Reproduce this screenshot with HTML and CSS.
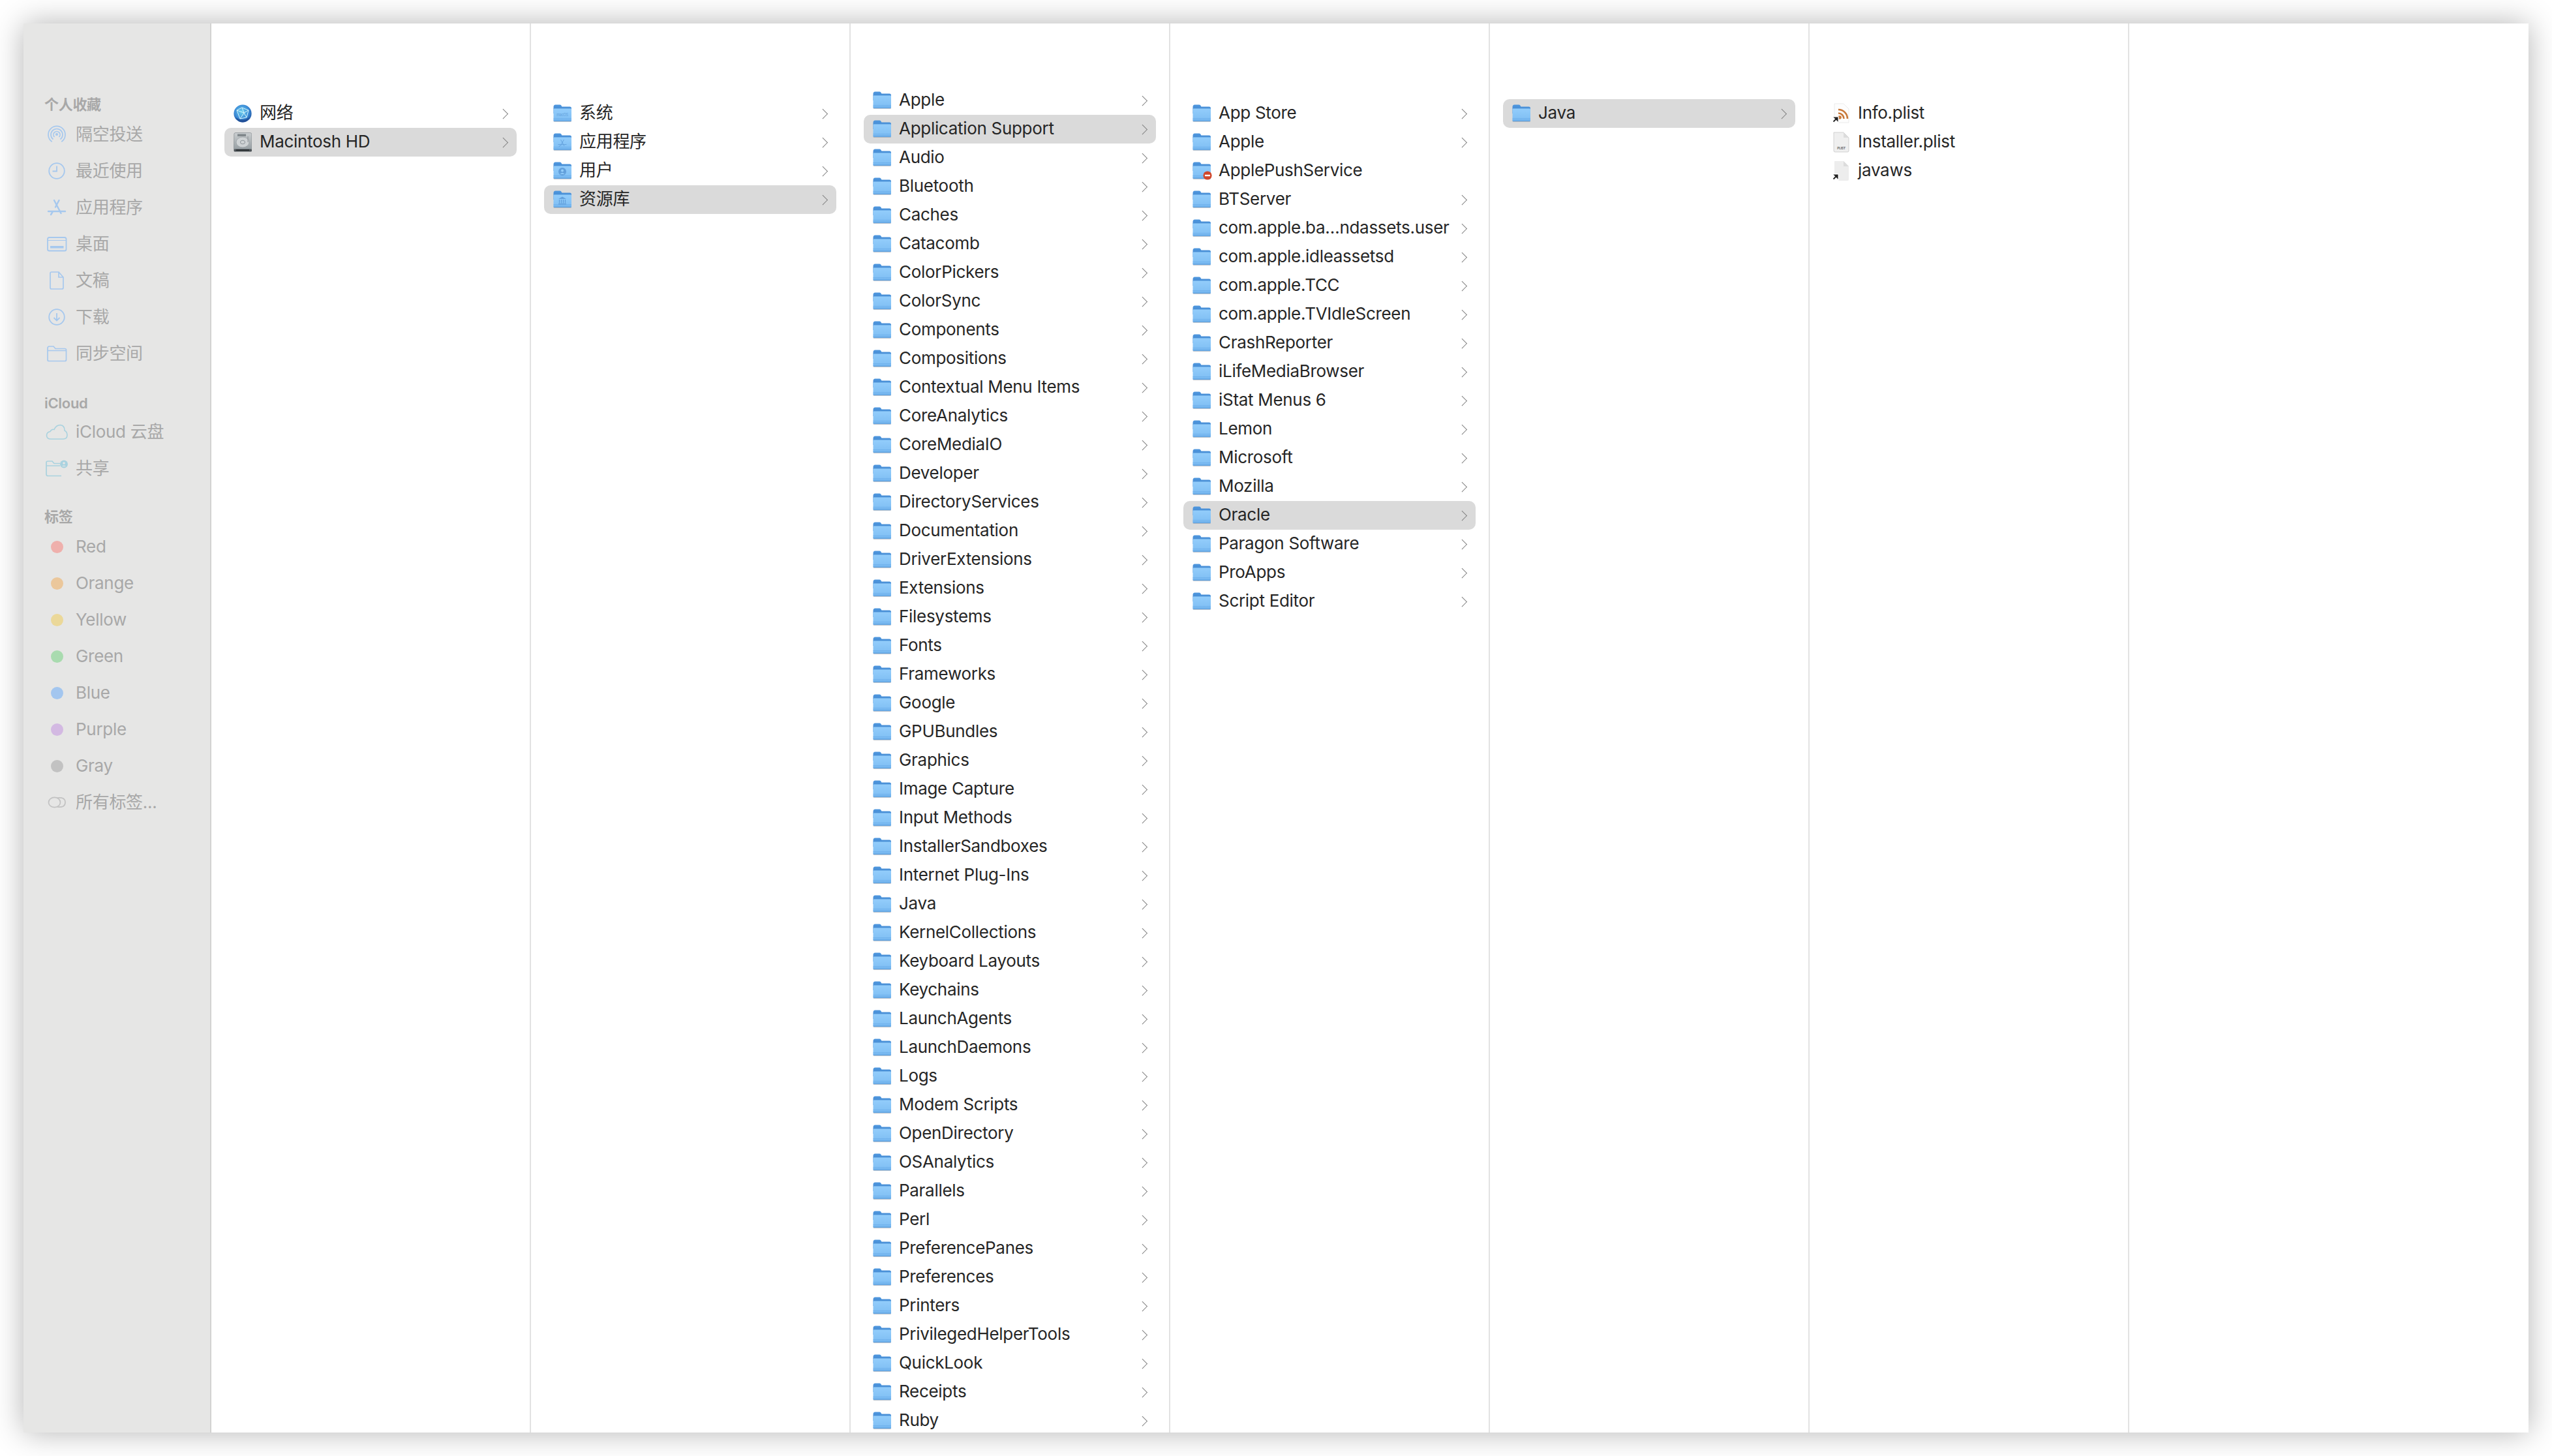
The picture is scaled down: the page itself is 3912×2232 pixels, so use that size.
FILE: index.html
```html
<!DOCTYPE html>
<html lang="zh-CN">
<head>
    <meta charset="UTF-8">
    <title>资源库</title>
    <link rel="stylesheet" href="styles.css">
</head>
<body>
    <svg class="defs" xmlns="http://www.w3.org/2000/svg">
        <defs>
            <linearGradient id="folderFront" x1="0" y1="0" x2="0" y2="1">
                <stop offset="0" stop-color="#93cdfb"/>
                <stop offset="1" stop-color="#7dbdf3"/>
            </linearGradient>
            <linearGradient id="folderBack" x1="0" y1="0" x2="0" y2="1">
                <stop offset="0" stop-color="#4f97de"/>
                <stop offset="1" stop-color="#3f83cc"/>
            </linearGradient>
            <radialGradient id="globeFill" cx="0.45" cy="0.4" r="0.65">
                <stop offset="0" stop-color="#6fd0ee"/>
                <stop offset="0.6" stop-color="#3d8ed8"/>
                <stop offset="1" stop-color="#1d4f9c"/>
            </radialGradient>
            <linearGradient id="diskFill" x1="0" y1="0" x2="0" y2="1">
                <stop offset="0" stop-color="#c9cdcf"/>
                <stop offset="1" stop-color="#98a0a4"/>
            </linearGradient>
            <symbol id="folder" viewBox="0 0 28 28">
                <rect x="0.5" y="24" width="27.5" height="3" rx="1.5" fill="#8a98a6" opacity="0.55"/>
                <path d="M0.5 4Q0.5 0.5 3.5 0.5H10Q11.6 0.5 12.4 1.8L13.4 3.4H25.5Q28 3.4 28 6V14H0.5Z" fill="url(#folderBack)"/>
                <rect x="0.5" y="6" width="27.5" height="20" rx="1.6" fill="url(#folderFront)"/>
                <rect x="0.5" y="6" width="27.5" height="1" fill="#6aa9e4" opacity="0.7"/>
                <rect x="0.5" y="21" width="27.5" height="1" fill="#6fb1ec"/>
                <rect x="0.5" y="23" width="27.5" height="1" fill="#6fb1ec"/>
                <path d="M0.5 24.5H28V24.6Q28 26 26.4 26H2.1Q0.5 26 0.5 24.6Z" fill="#64a5e2"/>
            </symbol>
            <symbol id="globe" viewBox="0 0 28 28">
                <circle cx="14" cy="14" r="13.6" fill="url(#globeFill)"/>
                <path d="M5 9L13 5L23 9L20 20L10 22L5 9M13 5L16 13L23 9M16 13L20 20M16 13L5 9M16 13L10 22" fill="none" stroke="#d4f5fc" stroke-width="1"/>
                <path d="M3 20Q14 27 25 20Q20 27.6 14 27.6Q7 27.6 3 20Z" fill="#1a3f86" opacity="0.6"/>
            </symbol>
            <symbol id="disk" viewBox="0 0 28 30">
                <rect x="0.5" y="25" width="27.5" height="4.5" rx="1.5" fill="#4d5357"/>
                <path d="M3 0.5H25.5Q27.5 0.5 27.8 2.5L28 25.5H0.5L0.8 2.5Q1 0.5 3 0.5Z" fill="url(#diskFill)" stroke="#7b8286" stroke-width="0.6"/>
                <rect x="6" y="2.5" width="13" height="3.4" fill="#7e8589"/>
                <ellipse cx="14" cy="15" rx="10" ry="8" fill="#cfd3d5" stroke="#9aa1a5" stroke-width="0.8"/>
                <ellipse cx="14" cy="15" rx="3.6" ry="2.8" fill="none" stroke="#80878b" stroke-width="0.8"/>
                <path d="M22 6V15" stroke="#80878b" stroke-width="0.8"/>
                <rect x="4" y="26.3" width="20" height="1.6" fill="#23272a"/>
            </symbol>
            <symbol id="sideAirdrop" viewBox="0 0 34 28">
                <g fill="none" stroke="currentColor" stroke-width="1.7">
                    <path d="M9.7 25.2A13 13 0 1 1 24.3 25.2"/>
                    <path d="M11.5 21.6A9 9 0 1 1 22.5 21.6"/>
                    <path d="M13.4 18A5 5 0 1 1 20.6 18"/>
                </g>
                <circle cx="17" cy="14" r="2" fill="currentColor"/>
            </symbol>
            <symbol id="sideClock" viewBox="0 0 34 28">
                <g fill="none" stroke="currentColor" stroke-width="1.8">
                    <circle cx="17" cy="14" r="11.8"/>
                    <path d="M17 6.5V14.5H10.5"/>
                </g>
            </symbol>
            <symbol id="sideApps" viewBox="0 0 34 28">
                <g fill="none" stroke="currentColor" stroke-width="2.4" stroke-linecap="round">
                    <path d="M13 3L23.5 23"/>
                    <path d="M20.5 3L15 13.5"/>
                    <path d="M4 20H30"/>
                    <path d="M8 25L10.5 21"/>
                </g>
            </symbol>
            <symbol id="sideDesktop" viewBox="0 0 34 28">
                <rect x="3" y="4" width="28.5" height="20.5" rx="2.6" fill="none" stroke="currentColor" stroke-width="1.8"/>
                <path d="M3 8.5H31.5" stroke="currentColor" stroke-width="1"/>
                <rect x="7" y="17" width="20.5" height="3.6" fill="currentColor"/>
            </symbol>
            <symbol id="sideDoc" viewBox="0 0 34 28">
                <path d="M9 1H20L27 9V25Q27 27 25 27H9Q7 27 7 25V3Q7 1 9 1ZM20 1V9H27" fill="none" stroke="currentColor" stroke-width="1.7"/>
            </symbol>
            <symbol id="sideDownload" viewBox="0 0 34 28">
                <g fill="none" stroke="currentColor" stroke-width="1.8">
                    <circle cx="17" cy="14" r="11.8"/>
                    <path d="M17 8V19M12.5 15L17 19.5L21.5 15"/>
                </g>
            </symbol>
            <symbol id="sideFolder" viewBox="0 0 34 28">
                <path d="M3 6Q3 3 5.5 3H12L15 6.5H29.5Q31.5 6.5 31.5 8.5V23.5Q31.5 25.5 29.5 25.5H5Q3 25.5 3 23.5ZM3 9.5H31.5" fill="none" stroke="currentColor" stroke-width="1.7"/>
            </symbol>
            <symbol id="sideCloud" viewBox="0 0 34 28">
                <path d="M8 25Q1.5 25 1.5 19.5Q1.5 14.5 7 13.5Q9 9.5 13 10.5Q16 3.5 22.5 3.5Q29 4 29 12Q33 14 33 19Q33 25 27 25Z" fill="none" stroke="currentColor" stroke-width="1.6"/>
            </symbol>
            <symbol id="sideShared" viewBox="0 0 34 28">
                <path d="M24 25.5H3.5Q1 25.5 1 23V5Q1 3 3.5 3H10L13 6.5H22M1 10H22" fill="none" stroke="currentColor" stroke-width="1.7"/>
                <circle cx="28" cy="7.5" r="6" fill="currentColor"/>
                <circle cx="28" cy="6" r="1.8" fill="#e6e6e5"/>
                <path d="M24.8 11Q28 7.8 31.2 11" fill="#e6e6e5"/>
            </symbol>
            <symbol id="sideTags" viewBox="0 0 34 28">
                <g fill="none" stroke="currentColor" stroke-width="1.7">
                    <ellipse cx="13.5" cy="14" rx="9" ry="7.6"/>
                    <path d="M18 7Q30 5.6 30 14Q30 22.4 18 21"/>
                </g>
            </symbol>
        </defs>
    </svg>

    <div class="window">
        <aside class="sidebar">
            <div class="side-head">个人收藏</div>
            <div class="side-item"><svg class="side-icon"><use href="#sideAirdrop"/></svg>隔空投送</div>
            <div class="side-item"><svg class="side-icon"><use href="#sideClock"/></svg>最近使用</div>
            <div class="side-item"><svg class="side-icon"><use href="#sideApps"/></svg>应用程序</div>
            <div class="side-item"><svg class="side-icon"><use href="#sideDesktop"/></svg>桌面</div>
            <div class="side-item"><svg class="side-icon"><use href="#sideDoc"/></svg>文稿</div>
            <div class="side-item"><svg class="side-icon"><use href="#sideDownload"/></svg>下载</div>
            <div class="side-item"><svg class="side-icon"><use href="#sideFolder"/></svg>同步空间</div>

            <div class="side-head cloud-head">iCloud</div>
            <div class="side-item"><svg class="side-icon teal"><use href="#sideCloud"/></svg>iCloud 云盘</div>
            <div class="side-item"><svg class="side-icon teal"><use href="#sideShared"/></svg>共享</div>

            <div class="side-head tags-head">标签</div>
            <div class="side-item"><i class="dot red"></i>Red</div>
            <div class="side-item"><i class="dot orange"></i>Orange</div>
            <div class="side-item"><i class="dot yellow"></i>Yellow</div>
            <div class="side-item"><i class="dot green"></i>Green</div>
            <div class="side-item"><i class="dot blue"></i>Blue</div>
            <div class="side-item"><i class="dot purple"></i>Purple</div>
            <div class="side-item"><i class="dot gray"></i>Gray</div>
            <div class="side-item"><svg class="side-icon grey"><use href="#sideTags"/></svg>所有标签...</div>
        </aside>

        <section class="col">
            <div class="row more"><svg class="icon"><use href="#globe"/></svg>网络</div>
            <div class="row more active"><svg class="icon disk"><use href="#disk"/></svg>Macintosh HD</div>
        </section>

        <section class="col">
            <div class="row more">
                <span class="icon-wrap"><svg class="icon"><use href="#folder"/></svg><svg class="glyph" viewBox="0 0 28 28"><text x="14" y="18" class="glyph-text">macOS</text></svg></span>系统
            </div>
            <div class="row more">
                <span class="icon-wrap"><svg class="icon"><use href="#folder"/></svg><svg class="glyph" viewBox="0 0 28 28"><path d="M11.5 10L17 20M16.5 10L11 20M7.5 17.5H20.5M9 21L10 19" fill="none" stroke="#62a0dc" stroke-width="0.9"/></svg></span>应用程序
            </div>
            <div class="row more">
                <span class="icon-wrap"><svg class="icon"><use href="#folder"/></svg><svg class="glyph" viewBox="0 0 28 28"><circle cx="14" cy="15" r="6" fill="#62a0dc"/><circle cx="14" cy="13.4" r="2" fill="#93cdfb"/><path d="M10.4 19Q14 14.8 17.6 19" fill="#93cdfb"/></svg></span>用户
            </div>
            <div class="row more active">
                <span class="icon-wrap"><svg class="icon"><use href="#folder"/></svg><svg class="glyph" viewBox="0 0 28 28"><path d="M8 13L14 9.5L20 13ZM8 20H20V21.5H8Z" fill="#62a0dc"/><path d="M9.5 14V19.5M12.5 14V19.5M15.5 14V19.5M18.5 14V19.5" stroke="#62a0dc" stroke-width="1.3"/></svg></span>资源库
            </div>
        </section>

        <section class="col scrolled">
            <div class="row more"><svg class="icon"><use href="#folder"/></svg>Apple</div>
            <div class="row more active"><svg class="icon"><use href="#folder"/></svg>Application Support</div>
            <div class="row more"><svg class="icon"><use href="#folder"/></svg>Audio</div>
            <div class="row more"><svg class="icon"><use href="#folder"/></svg>Bluetooth</div>
            <div class="row more"><svg class="icon"><use href="#folder"/></svg>Caches</div>
            <div class="row more"><svg class="icon"><use href="#folder"/></svg>Catacomb</div>
            <div class="row more"><svg class="icon"><use href="#folder"/></svg>ColorPickers</div>
            <div class="row more"><svg class="icon"><use href="#folder"/></svg>ColorSync</div>
            <div class="row more"><svg class="icon"><use href="#folder"/></svg>Components</div>
            <div class="row more"><svg class="icon"><use href="#folder"/></svg>Compositions</div>
            <div class="row more"><svg class="icon"><use href="#folder"/></svg>Contextual Menu Items</div>
            <div class="row more"><svg class="icon"><use href="#folder"/></svg>CoreAnalytics</div>
            <div class="row more"><svg class="icon"><use href="#folder"/></svg>CoreMediaIO</div>
            <div class="row more"><svg class="icon"><use href="#folder"/></svg>Developer</div>
            <div class="row more"><svg class="icon"><use href="#folder"/></svg>DirectoryServices</div>
            <div class="row more"><svg class="icon"><use href="#folder"/></svg>Documentation</div>
            <div class="row more"><svg class="icon"><use href="#folder"/></svg>DriverExtensions</div>
            <div class="row more"><svg class="icon"><use href="#folder"/></svg>Extensions</div>
            <div class="row more"><svg class="icon"><use href="#folder"/></svg>Filesystems</div>
            <div class="row more"><svg class="icon"><use href="#folder"/></svg>Fonts</div>
            <div class="row more"><svg class="icon"><use href="#folder"/></svg>Frameworks</div>
            <div class="row more"><svg class="icon"><use href="#folder"/></svg>Google</div>
            <div class="row more"><svg class="icon"><use href="#folder"/></svg>GPUBundles</div>
            <div class="row more"><svg class="icon"><use href="#folder"/></svg>Graphics</div>
            <div class="row more"><svg class="icon"><use href="#folder"/></svg>Image Capture</div>
            <div class="row more"><svg class="icon"><use href="#folder"/></svg>Input Methods</div>
            <div class="row more"><svg class="icon"><use href="#folder"/></svg>InstallerSandboxes</div>
            <div class="row more"><svg class="icon"><use href="#folder"/></svg>Internet Plug-Ins</div>
            <div class="row more"><svg class="icon"><use href="#folder"/></svg>Java</div>
            <div class="row more"><svg class="icon"><use href="#folder"/></svg>KernelCollections</div>
            <div class="row more"><svg class="icon"><use href="#folder"/></svg>Keyboard Layouts</div>
            <div class="row more"><svg class="icon"><use href="#folder"/></svg>Keychains</div>
            <div class="row more"><svg class="icon"><use href="#folder"/></svg>LaunchAgents</div>
            <div class="row more"><svg class="icon"><use href="#folder"/></svg>LaunchDaemons</div>
            <div class="row more"><svg class="icon"><use href="#folder"/></svg>Logs</div>
            <div class="row more"><svg class="icon"><use href="#folder"/></svg>Modem Scripts</div>
            <div class="row more"><svg class="icon"><use href="#folder"/></svg>OpenDirectory</div>
            <div class="row more"><svg class="icon"><use href="#folder"/></svg>OSAnalytics</div>
            <div class="row more"><svg class="icon"><use href="#folder"/></svg>Parallels</div>
            <div class="row more"><svg class="icon"><use href="#folder"/></svg>Perl</div>
            <div class="row more"><svg class="icon"><use href="#folder"/></svg>PreferencePanes</div>
            <div class="row more"><svg class="icon"><use href="#folder"/></svg>Preferences</div>
            <div class="row more"><svg class="icon"><use href="#folder"/></svg>Printers</div>
            <div class="row more"><svg class="icon"><use href="#folder"/></svg>PrivilegedHelperTools</div>
            <div class="row more"><svg class="icon"><use href="#folder"/></svg>QuickLook</div>
            <div class="row more"><svg class="icon"><use href="#folder"/></svg>Receipts</div>
            <div class="row more"><svg class="icon"><use href="#folder"/></svg>Ruby</div>
        </section>

        <section class="col">
            <div class="row more"><svg class="icon"><use href="#folder"/></svg>App Store</div>
            <div class="row more"><svg class="icon"><use href="#folder"/></svg>Apple</div>
            <div class="row">
                <span class="icon-wrap"><svg class="icon"><use href="#folder"/></svg><svg class="glyph" viewBox="0 0 28 28"><circle cx="23" cy="21" r="6.6" fill="#d0472b"/><rect x="19" y="19.8" width="8" height="2.4" fill="#fff"/></svg></span>ApplePushService
            </div>
            <div class="row more"><svg class="icon"><use href="#folder"/></svg>BTServer</div>
            <div class="row more"><svg class="icon"><use href="#folder"/></svg>com.apple.ba…ndassets.user</div>
            <div class="row more"><svg class="icon"><use href="#folder"/></svg>com.apple.idleassetsd</div>
            <div class="row more"><svg class="icon"><use href="#folder"/></svg>com.apple.TCC</div>
            <div class="row more"><svg class="icon"><use href="#folder"/></svg>com.apple.TVIdleScreen</div>
            <div class="row more"><svg class="icon"><use href="#folder"/></svg>CrashReporter</div>
            <div class="row more"><svg class="icon"><use href="#folder"/></svg>iLifeMediaBrowser</div>
            <div class="row more"><svg class="icon"><use href="#folder"/></svg>iStat Menus 6</div>
            <div class="row more"><svg class="icon"><use href="#folder"/></svg>Lemon</div>
            <div class="row more"><svg class="icon"><use href="#folder"/></svg>Microsoft</div>
            <div class="row more"><svg class="icon"><use href="#folder"/></svg>Mozilla</div>
            <div class="row more active"><svg class="icon"><use href="#folder"/></svg>Oracle</div>
            <div class="row more"><svg class="icon"><use href="#folder"/></svg>Paragon Software</div>
            <div class="row more"><svg class="icon"><use href="#folder"/></svg>ProApps</div>
            <div class="row more"><svg class="icon"><use href="#folder"/></svg>Script Editor</div>
        </section>

        <section class="col">
            <div class="row more active"><svg class="icon"><use href="#folder"/></svg>Java</div>
        </section>

        <section class="col">
            <div class="row">
                <svg class="icon file" viewBox="0 0 28 32">
                    <path d="M4 1H18L26 9V30H4Z" fill="#fdfdfd" stroke="#e6e6e6" stroke-width="0.8"/>
                    <g fill="none" stroke="#c9793a" stroke-width="2.6">
                        <path d="M10 10A14 14 0 0 1 24 24"/>
                        <path d="M10 15.5A8.5 8.5 0 0 1 18.5 24"/>
                    </g>
                    <circle cx="12" cy="22" r="2.8" fill="#c9793a"/>
                    <rect x="0" y="20" width="11" height="11" rx="2" fill="#fff"/>
                    <path d="M2.5 28.5L7.5 23.5M4.5 22.5H8.7V26.7Z" stroke="#222" stroke-width="1.8" fill="#222"/>
                </svg>Info.plist
            </div>
            <div class="row">
                <svg class="icon file" viewBox="0 0 28 32">
                    <path d="M3 1H18L26 9V29Q26 31 24 31H5Q3 31 3 29Z" fill="#efefef" stroke="#c8c8c8" stroke-width="0.8"/>
                    <path d="M18 1V9H26Z" fill="#dcdcdc"/>
                    <text x="14.5" y="27" class="plist-text">PLIST</text>
                </svg>Installer.plist
            </div>
            <div class="row">
                <svg class="icon file" viewBox="0 0 28 32">
                    <path d="M4 1H18L26 9V29Q26 31 24 31H6Q4 31 4 29Z" fill="#ededed"/>
                    <path d="M18 1V9H26Z" fill="#dcdcdc"/>
                    <rect x="0" y="20" width="11" height="11" rx="2" fill="#fff"/>
                    <path d="M2.5 28.5L7.5 23.5M4.5 22.5H8.7V26.7Z" stroke="#222" stroke-width="1.8" fill="#222"/>
                </svg>javaws
            </div>
        </section>

        <section class="col last"></section>
    </div>
</body>
</html>
```

FILE: styles.css
```css
* {
    margin: 0;
    padding: 0;
    box-sizing: border-box;
}
html, body {
    height: 100%;
}
body {
    background: #fff;
    padding: 36px;
    font-family: Inter, "Noto Sans CJK SC", sans-serif;
    font-size: 26px;
    line-height: 32px;
    letter-spacing: -0.3px;
    color: #262626;
    overflow: hidden;
}
.defs {
    display: block;
    width: 0;
    height: 0;
}
.window {
    display: flex;
    height: 2160px;
    background: #fff;
    box-shadow: 0 0 44px rgba(0, 0, 0, 0.3);
    overflow: hidden;
}

/* sidebar */
.sidebar {
    width: 288px;
    flex: none;
    padding: 106px 0 0 32px;
    background: #e6e6e5;
    border-right: 2px solid #d2d2d1;
    color: #a8a8a8;
}
.side-head {
    height: 36px;
    line-height: 36px;
    font-size: 22px;
    font-weight: 600;
}
.cloud-head {
    height: 34px;
    margin-top: 30px;
}
.tags-head {
    margin-top: 28px;
}
.side-item {
    display: flex;
    align-items: center;
    height: 56px;
}
.side-icon {
    width: 34px;
    height: 28px;
    margin: 0 12px 0 2px;
    color: #a6c8ee;
}
.side-icon.teal {
    color: #a9d2df;
}
.side-icon.grey {
    color: #c2c2c2;
}
.dot {
    width: 19px;
    height: 19px;
    margin: 0 19px 0 10px;
    border-radius: 50%;
}
.red { background: #efb0ac; }
.orange { background: #ebc79b; }
.yellow { background: #ebd899; }
.green { background: #a9dbaf; }
.blue { background: #a3c6ef; }
.purple { background: #d3b9e2; }
.gray { background: #c2c2c2; }

/* browser columns */
.col {
    width: 490px;
    flex: none;
    padding: 116px 20px 0;
    border-right: 2px solid #e2e2e2;
    overflow: hidden;
}
.col.scrolled {
    padding-top: 96px;
}
.col.last {
    flex: 1;
    border-right: 0;
}
.row {
    display: flex;
    align-items: center;
    position: relative;
    height: 44px;
    padding: 0 0 2px 14px;
    border-radius: 10px;
    white-space: nowrap;
}
.row.active {
    background: #dadada;
}
.row.more::after {
    content: "";
    position: absolute;
    right: 15.5px;
    top: 17px;
    width: 9.5px;
    height: 9.5px;
    border-top: 1.8px solid #808080;
    border-right: 1.8px solid #808080;
    transform: rotate(45deg);
}
.icon {
    width: 28px;
    height: 28px;
    flex: none;
    margin: 2px 12px 0 0;
}
.icon.disk {
    height: 30px;
}
.icon.file {
    height: 32px;
}
.icon-wrap {
    position: relative;
    display: flex;
}
.glyph {
    position: absolute;
    left: 0;
    top: 2px;
    width: 28px;
    height: 28px;
    overflow: visible;
}
.glyph-text {
    font-size: 5.5px;
    text-anchor: middle;
    fill: #62a0dc;
}
.plist-text {
    font-size: 5px;
    font-weight: 700;
    text-anchor: middle;
    fill: #6c6c6c;
}
```
